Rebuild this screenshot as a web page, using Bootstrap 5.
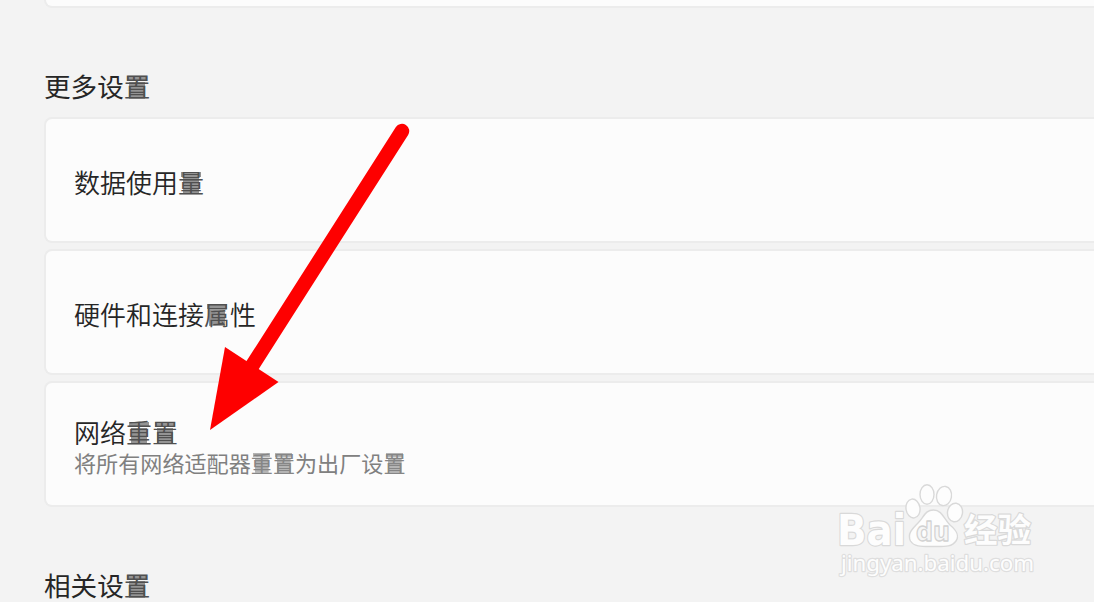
<!DOCTYPE html>
<html lang="zh-CN">
<head>
<meta charset="utf-8">
<meta name="viewport" content="width=device-width, initial-scale=1">
<title>更多设置</title>
<link href="https://cdn.jsdelivr.net/npm/bootstrap@5.3.0/dist/css/bootstrap.min.css" rel="stylesheet">
<style>
  body { background: #f3f3f3; color: #262626; height: 602px; font-family: "Noto Sans CJK SC", "Liberation Sans", sans-serif; }
  .settings { padding-left: 44px; }
  .setting { height: 126px; background: #fcfcfc; border: 2px solid #ececec; border-right: 0; border-radius: 8px 0 0 8px; padding-left: 28px; }
  .setting + .setting { margin-top: 6px; }
  .setting.previous { height: 8px; border-top: 0; border-radius: 0 0 0 8px; }
  .section-title { font-size: 26.6px; line-height: 36px; margin: 0; font-weight: 400; }
  .section-title.more { margin-top: 60px; margin-bottom: 13px; }
  .section-title.related { margin-top: 60px; }
  .label { font-size: 26px; line-height: 34px; font-weight: 350; padding-top: 4px; }
  .hint { font-size: 22.1px; line-height: 27px; padding-bottom: 2px; color: #808080; font-weight: 400; }
  /* grey fill behind the dense glyphs */
  .dense { color: #505050; background: linear-gradient(#949494, #949494) 50% 72% / 62% 43% no-repeat, linear-gradient(#949494, #949494) 50% 29% / 78% 14% no-repeat; }
  .hint .dense { color: #868686; background-image: linear-gradient(#b4b4b4, #b4b4b4), linear-gradient(#b4b4b4, #b4b4b4); }
  .pointer { left: 0; top: 0; pointer-events: none; }
  .watermark { left: 830px; top: 478px; }
</style>
</head>
<body class="position-relative overflow-hidden">
<main class="settings d-flex flex-column">
  <div class="setting previous"></div>
  <h2 class="section-title more">更多设<span class="dense">置</span></h2>
  <section class="d-flex flex-column">
    <div class="setting d-flex align-items-center"><div class="label">数据使用<span class="dense">量</span></div></div>
    <div class="setting d-flex align-items-center"><div class="label">硬件和连接<span class="dense">属</span>性</div></div>
    <div class="setting d-flex flex-column justify-content-center">
      <div class="label">网络<span class="dense">重</span><span class="dense">置</span></div>
      <div class="hint">将所有网络适配器<span class="dense">重</span><span class="dense">置</span>为出厂设<span class="dense">置</span></div>
    </div>
  </section>
  <h2 class="section-title related">相关设<span class="dense">置</span></h2>
</main>
<svg class="pointer position-absolute" width="1094" height="602" viewBox="0 0 1094 602" aria-hidden="true">
  <path d="M402 131 252 366" stroke="#fe0000" stroke-width="14.5" stroke-linecap="round"/>
  <path d="M225 347 278.500 382 210 430Z" fill="#fe0000"/>
</svg>
<svg class="watermark position-absolute" width="214" height="108" viewBox="830 478 214 108" role="img" aria-label="Baidu">
  <g fill="#fdfdfd" stroke="#d9d9d9" stroke-width="1.400" stroke-linejoin="round">
    <ellipse cx="913" cy="508.500" rx="7" ry="9.500" transform="rotate(-8 913 508.500)"/>
    <ellipse cx="927" cy="494.500" rx="7" ry="9.700"/>
    <ellipse cx="944" cy="496" rx="7.500" ry="9.700" transform="rotate(10 944 496)"/>
    <ellipse cx="955" cy="512.500" rx="7.500" ry="9.300" transform="rotate(8 955 512.500)"/>
    <path d="M933.500 510C942 510 944 519 950 525C956 530 960 535 956 541C952 547 945 546.500 933.500 546.500C922 546.500 914 547 910.500 541C907 534 912 529 918 523C924 517 925 510 933.500 510Z"/>
    <g paint-order="stroke" stroke-width="2.400">
      <text x="837" y="545" font-family="DejaVu Sans" font-weight="700" font-size="43" textLength="69" lengthAdjust="spacingAndGlyphs">Bai</text>
      <text x="964" y="542" font-family="Noto Sans CJK SC" font-weight="700" font-size="33" textLength="67" lengthAdjust="spacingAndGlyphs">经验</text>
      <text x="841" y="571" font-family="Noto Sans" font-size="22.500" stroke="#dedede" textLength="193" lengthAdjust="spacingAndGlyphs">jingyan.baidu.com</text>
    </g>
    <text x="916" y="541" font-family="DejaVu Sans" font-size="27" fill="#f6f6f6" stroke="#d2d2d2" stroke-width="1.300" textLength="34" lengthAdjust="spacingAndGlyphs" font-weight="700">du</text>
  </g>
</svg>
<script src="https://cdn.jsdelivr.net/npm/bootstrap@5.3.0/dist/js/bootstrap.bundle.min.js"></script>
</body>
</html>
